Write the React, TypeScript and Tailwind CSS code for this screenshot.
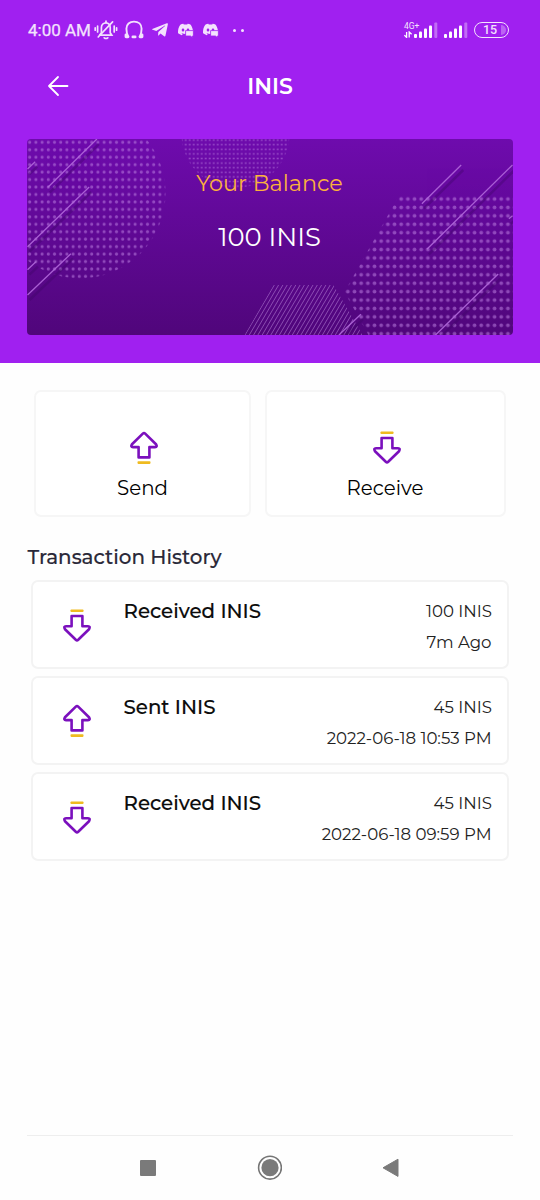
import { FaTelegramPlane } from "react-icons/fa";
import { BsDiscord } from "react-icons/bs";

type Transaction = {
  type: "sent" | "received";
  title: string;
  amount: string;
  date: string;
};

const transactions: Transaction[] = [
  { type: "received", title: "Received INIS", amount: "100 INIS", date: "7m Ago" },
  { type: "sent", title: "Sent INIS", amount: "45 INIS", date: "2022-06-18 10:53 PM" },
  { type: "received", title: "Received INIS", amount: "45 INIS", date: "2022-06-18 09:59 PM" },
];

// [x1, y1, x2, y2]
const streaks = [
  [69.4, 0, 20.4, 48.3],
  [61.7, 48, 0, 107.7],
  [7.7, 22.7, 0, 30],
  [43.4, 114.7, 0, 156],
  [8.4, 122.7, 0, 130.7],
  [433.7, 26, 394.4, 64.7],
  [485, 26, 399.4, 110.3],
  [485, 76.7, 481.4, 79.7],
  [470.7, 135, 408, 196],
  [333.4, 175.3, 311.4, 196],
];

const ArrowIcon = ({ down = false }: { down?: boolean }) => (
  <svg width="30" height="36" viewBox="0 0 30 36" className="shrink-0">
    <g transform={down ? "matrix(1 0 0 -1 0 35.4)" : undefined}>
      <path
        d="M13.8 3.6Q15 2.5 16.2 3.6L27 14.2Q28.8 17.1 26 17.1H20.4V27.4H9.6V17.1H4Q1.2 17.1 3 14.2Z"
        fill="none"
        stroke="#7b10bd"
        strokeWidth="2.6"
        strokeLinejoin="round"
      />
      <rect x="8.5" y="31.3" width="13" height="2.6" rx="0.8" fill="#efbb20" />
    </g>
  </svg>
);

const SignalBars = () => (
  <svg width="24" height="16" viewBox="0 0 24 16" fill="#fff">
    <rect x="0" y="12" width="3" height="4" rx="1" />
    <rect x="5" y="9.5" width="3" height="6.5" rx="1" />
    <rect x="10" y="6.5" width="3" height="9.5" rx="1" />
    <rect x="15" y="3.5" width="3" height="12.5" rx="1" />
    <rect x="20.3" y="0.5" width="3" height="15.5" rx="1" opacity="0.35" />
  </svg>
);

const MutedBell = () => (
  <svg width="24" height="20" viewBox="0 0 24 20" fill="none" stroke="#f3e2fd" strokeWidth="1.7" strokeLinecap="round">
    <path d="M6.5 15.2H17.8L16.2 12.8V7.6C16.2 4.6 14.4 2.8 12 2.8S7.4 4.6 7.4 7.6V12.8L5.6 15.2" />
    <path d="M12 2.4V1.2M10.2 17.8Q12 19.2 13.8 17.8" />
    <path d="M4.2 17L18.6 1.8" />
    <path d="M3.6 6V12M1.2 7.8V10.2M20.2 6V12M22.6 7.8V10.2" />
  </svg>
);

const Headset = () => (
  <svg width="20" height="20" viewBox="0 0 20 20" fill="none" stroke="#f3e2fd" strokeWidth="1.9" strokeLinecap="round">
    <path d="M4.2 16.5C2.4 13 2.4 9.8 2.4 8.8C2.4 4.4 5.6 1.6 10 1.6S17.6 4.4 17.6 8.8C17.6 9.8 17.6 13 15.8 16.5" />
    <path d="M2 14.8V16.8M4 16.8H3M18 14.8V16.8M16 16.8H17" strokeWidth="2.8" />
    <path d="M8.8 16.9H11.2" strokeWidth="2.6" />
  </svg>
);

// discord face with the small chat bubble in its lower right corner
const DiscordChat = () => (
  <span className="relative flex w-4 h-4">
    <BsDiscord className="w-[15px] h-[15px] text-[#f3e2fd]" />
    <svg width="9" height="8" viewBox="0 0 9 8" className="absolute right-0 bottom-0">
      <path d="M0.6 0.6H8.4V6H7.4V7.6L5.4 6H0.6Z" fill="#f3e2fd" stroke="#a020f0" strokeWidth="0.8" />
    </svg>
  </span>
);

const StatusBar = () => (
  <div className="flex items-center h-[60px] pl-[28px] pr-[31px] text-[#f3e2fd]">
    <span className="font-[Roboto,sans-serif] text-[17px] w-[66px] pt-[2px] whitespace-nowrap [-webkit-text-stroke:0.25px]">4:00 AM</span>
    <MutedBell />
    <div className="flex items-center ml-[6px] gap-[7px]">
      <Headset />
      <FaTelegramPlane className="w-[18px] h-[18px]" />
      <span className="flex gap-[9px] pl-[1.5px]">
        <DiscordChat />
        <DiscordChat />
      </span>
    </div>
    <div className="flex gap-[5px] ml-[14px]">
      <span className="w-[3px] h-[3px] rounded-full bg-[#f3e2fd]" />
      <span className="w-[3px] h-[3px] rounded-full bg-[#f3e2fd]" />
    </div>
    <div className="flex items-end ml-auto">
      <div className="flex flex-col items-start w-[9px] mr-[1px]">
        <span className="font-[Roboto,sans-serif] text-[8.5px] leading-[9px] whitespace-nowrap">4G+</span>
        <svg width="9" height="7" viewBox="0 0 9 7" stroke="#fff" strokeWidth="1.3" fill="none">
          <path d="M2.6 1V6.4L0.4 4.2M5.2 6.4V1L7.6 3.2" />
        </svg>
      </div>
      <SignalBars />
      <span className="w-[6px]" />
      <SignalBars />
      <div className="relative flex items-center justify-center w-[35px] h-4 ml-[6px] border-[1.5px] border-[#f3e2fd] rounded-full overflow-hidden">
        <span className="absolute right-[2px] inset-y-[2px] w-[5px] rounded-r-full bg-white/30" />
        <span className="font-[Roboto,sans-serif] font-medium text-[12.5px] leading-none pr-[3px]">15</span>
      </div>
    </div>
  </div>
);

const CardPattern = () => (
  <svg width="486" height="196" viewBox="-0.5 0 486 196" className="absolute inset-0">
    <defs>
      <pattern id="dotsLeft" x="-0.9" y="-0.4" width="6.2" height="7.45" patternUnits="userSpaceOnUse">
        <circle cx="3.1" cy="3.7" r="1.6" fill="#bb7ee0" />
      </pattern>
      <pattern id="dotsTop" x="0.2" y="-1.2" width="4" height="4.6" patternUnits="userSpaceOnUse">
        <circle cx="2" cy="2.3" r="1" fill="#bb7ee0" />
      </pattern>
      <pattern id="dotsRight" x="370.4" y="55.8" width="6.67" height="8.42" patternUnits="userSpaceOnUse">
        <circle cx="3.3" cy="4.2" r="1.9" fill="#bb7ee0" />
      </pattern>
      <clipPath id="hexClip">
        <path d="M217 196L246 146H306L335 196Z" />
      </clipPath>
    </defs>
    <circle cx="52.5" cy="54" r="85.5" fill="url(#dotsLeft)" opacity="0.55" />
    <circle cx="208" cy="-5" r="54" fill="url(#dotsTop)" opacity="0.55" />
    <path d="M372 56H485V196H341L317 153Z" fill="url(#dotsRight)" opacity="0.55" />
    <g clipPath="url(#hexClip)" stroke="#b17bd2" strokeWidth="1" opacity="0.6">
      {Array.from({ length: 30 }, (_, i) => (
        <line key={i} x1={217.5 + i * 4.3} y1="196" x2={246.8 + i * 4.3} y2="146" />
      ))}
    </g>
    {streaks.map(([x1, y1, x2, y2], i) => (
      <g key={i}>
        <line x1={x1 + 2} y1={y1 + 5} x2={x2 + 2} y2={y2 + 5} stroke="#3d0565" strokeWidth="2.5" opacity="0.35" />
        <line x1={x1} y1={y1} x2={x2} y2={y2} stroke="#b268dc" strokeWidth="1.3" opacity="0.9" />
      </g>
    ))}
  </svg>
);

const BalanceCard = () => (
  <div className="relative w-[486px] h-[196px] mx-auto rounded-[4px] overflow-hidden bg-linear-to-b from-[#6e0bad] to-[#50067b]">
    <CardPattern />
    <div className="relative flex flex-col items-center pt-[29px] pr-[1px]">
      <p className="text-[22.3px] leading-[30px] text-[#fbb13c]">Your Balance</p>
      <p className="mt-[21px] text-[25.8px] leading-[36px] text-white">100 INIS</p>
    </div>
  </div>
);

const TransactionItem = ({ item }: { item: Transaction }) => (
  <div className="flex h-[89px] pl-[28.5px] pr-[15px] border-2 border-[#f3f3f3] rounded-[7px] bg-white">
    <div className={item.type === "received" ? "pt-[26px]" : "pt-[25px]"}>
      <ArrowIcon down={item.type === "received"} />
    </div>
    <div className="flex justify-between flex-1 pl-[32px] pt-[15px]">
      <h3 className="text-[19.8px] leading-[28px] font-medium text-[#0c0c0c] [-webkit-text-stroke:0.15px]">{item.title}</h3>
      <div className="flex flex-col items-end text-[16.6px] leading-[28px] text-[#222]">
        <span>{item.amount}</span>
        <span className="mt-[3px] pr-[0.5px]">{item.date}</span>
      </div>
    </div>
  </div>
);

const NavBar = () => (
  <div className="mx-[27px] h-[65px] border-t border-[#eeeeee]">
    <div className="flex items-center justify-between h-full pl-[113px] pr-[114px]">
      <span className="w-4 h-4 rounded-[1px] bg-[#7a7a7a]" />
      <svg width="26" height="26" viewBox="0 0 26 26">
        <circle cx="14" cy="12.7" r="11.4" fill="none" stroke="#757575" strokeWidth="1.6" />
        <circle cx="14" cy="12.7" r="8.6" fill="#7a7a7a" />
      </svg>
      <svg width="17" height="20" viewBox="0 0 17 20">
        <path d="M1 9.8L16 1.2V18.4Z" fill="#7a7a7a" stroke="#7a7a7a" strokeLinejoin="round" />
      </svg>
    </div>
  </div>
);

const App = () => {
  return (
    <div className="flex flex-col w-[540px] h-[1200px] bg-[#fefefe] font-[Montserrat,Inter,sans-serif]">
      <header className="h-[363px] bg-[#a020f0]">
        <StatusBar />
        <div className="grid grid-cols-3 items-center h-[52px] mb-[27px] px-[47px]">
          <svg width="22" height="22" viewBox="0 0 22 22" fill="none" stroke="#fff" strokeWidth="1.8" strokeLinecap="round" strokeLinejoin="round">
            <path d="M11 2L2 11L11 20M2 11H20.5" />
          </svg>
          <h1 className="text-center text-[22px] font-semibold text-white">INIS</h1>
        </div>
        <BalanceCard />
      </header>

      <section className="flex gap-[14px] px-[34px] mt-[27px]">
        <div className="flex flex-col items-center w-[217px] h-[127px] pt-[38px] border-2 border-[#f6f6f6] rounded-[7px] bg-white">
          <span className="pl-[2px]">
            <ArrowIcon />
          </span>
          <span className="mt-[8px] text-[19.8px] leading-[28px] text-black">Send</span>
        </div>
        <div className="flex flex-col items-center w-[241px] h-[127px] pt-[38px] border-2 border-[#f6f6f6] rounded-[7px] bg-white">
          <span className="pl-[2px]">
            <ArrowIcon down />
          </span>
          <span className="mt-[8px] pr-[1px] text-[19.8px] leading-[28px] text-black">Receive</span>
        </div>
      </section>

      <h2 className="mt-[26px] ml-[27.5px] text-[19.9px] leading-[28px] font-medium text-[#2a2838] [-webkit-text-stroke:0.15px]">Transaction History</h2>
      <section className="flex flex-col gap-[7px] mt-[9px] mx-[31px]">
        {transactions.map((item) => (
          <TransactionItem key={item.date} item={item} />
        ))}
      </section>

      <div className="mt-auto">
        <NavBar />
      </div>
    </div>
  );
};

export default App;
